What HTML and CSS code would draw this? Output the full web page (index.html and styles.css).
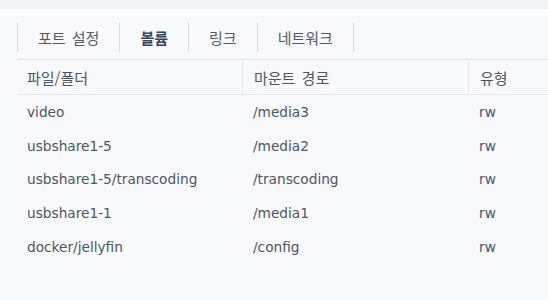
FILE: index.html
```html
<!DOCTYPE html>
<html lang="ko">
<head>
<meta charset="utf-8">
<link rel="stylesheet" href="styles.css">
</head>
<body>
<div class="topstrip"></div>
<div class="whitestrip"></div>
<div class="panel">
  <div class="tabbar">
    <div class="tab">포트 설정</div>
    <div class="tab active">볼륨</div>
    <div class="tab">링크</div>
    <div class="tab">네트워크</div>
  </div>
  <div class="table">
    <div class="row head">
      <div class="cell c1">파일/폴더</div>
      <div class="cell c2">마운트 경로</div>
      <div class="cell c3">유형</div>
    </div>
    <div class="row">
      <div class="cell c1">video</div>
      <div class="cell c2">/media3</div>
      <div class="cell c3">rw</div>
    </div>
    <div class="row">
      <div class="cell c1">usbshare1-5</div>
      <div class="cell c2">/media2</div>
      <div class="cell c3">rw</div>
    </div>
    <div class="row">
      <div class="cell c1">usbshare1-5/transcoding</div>
      <div class="cell c2">/transcoding</div>
      <div class="cell c3">rw</div>
    </div>
    <div class="row">
      <div class="cell c1">usbshare1-1</div>
      <div class="cell c2">/media1</div>
      <div class="cell c3">rw</div>
    </div>
    <div class="row">
      <div class="cell c1">docker/jellyfin</div>
      <div class="cell c2">/config</div>
      <div class="cell c3">rw</div>
    </div>
  </div>
</div>
</body>
</html>
```

FILE: styles.css
```css
html, body {
  margin: 0;
  padding: 0;
}
body {
  width: 548px;
  height: 300px;
  overflow: hidden;
  background: #f7f9fc;
  font-family: "DejaVu Sans", "Noto Sans CJK KR", sans-serif;
  font-size: 13.7px;
  color: #4b5663;
}
.topstrip {
  height: 9px;
  background: #f2f4f8;
}
.whitestrip {
  height: 7px;
  background: #ffffff;
}
.panel {
  background: #f7f9fc;
  padding-left: 17px;
}
.tabbar {
  display: flex;
  padding: 7px 0 7px 0;
  border-bottom: 1px solid #dce2ea;
}
.tab {
  height: 29px;
  line-height: 29px;
  padding: 0 20px;
  border-left: 1px solid #d6dde6;
  font-family: "Noto Sans CJK KR", "DejaVu Sans", sans-serif;
  font-size: 15px;
  word-spacing: 2px;
  color: #505b68;
}
.tab:last-child {
  border-right: 1px solid #d6dde6;
}
.tab.active {
  font-weight: bold;
  color: #34465e;
}
.table {
  display: flex;
  flex-direction: column;
}
.row {
  display: grid;
  grid-template-columns: 226px 226px 1fr;
  height: 33.75px;
  align-items: center;
}
.row.head {
  height: 34px;
  border-bottom: 1px solid #e3e8ee;
  align-items: stretch;
}
.cell {
  padding-left: 10px;
  white-space: nowrap;
}
.head .cell {
  display: flex;
  align-items: center;
  font-family: "Noto Sans CJK KR", "DejaVu Sans", sans-serif;
  font-size: 15px;
  word-spacing: 2px;
  color: #4b5663;
}
.head .c1, .head .c2 {
  border-right: 1px solid #e3e8ee;
}
.head .c2, .head .c3 {
  padding-left: 11px;
}
```
